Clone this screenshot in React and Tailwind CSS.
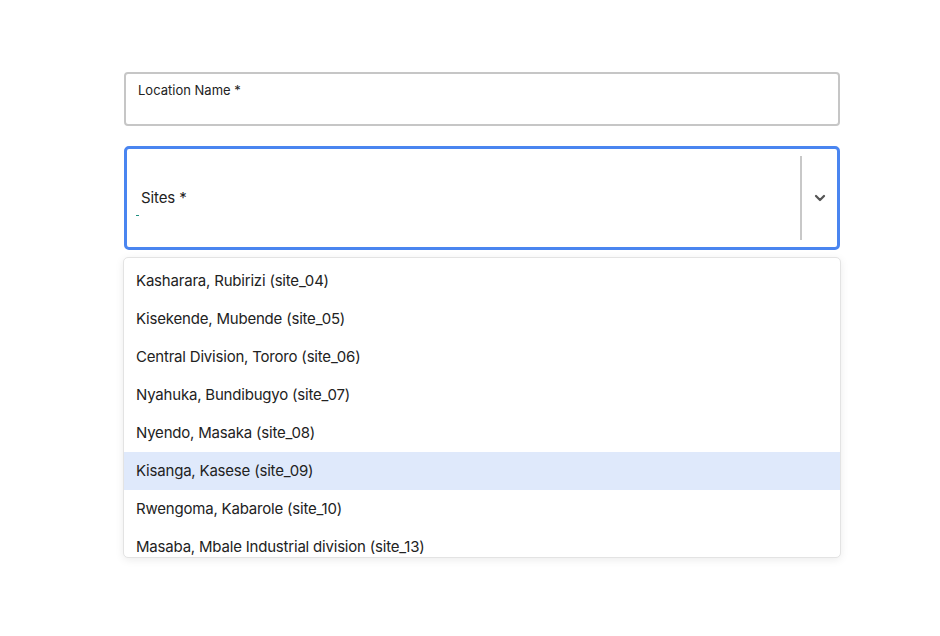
import { useState } from 'react';

const sites = [
    'Kasharara, Rubirizi (site_04)',
    'Kisekende, Mubende (site_05)',
    'Central Division, Tororo (site_06)',
    'Nyahuka, Bundibugyo (site_07)',
    'Nyendo, Masaka (site_08)',
    'Kisanga, Kasese (site_09)',
    'Rwengoma, Kabarole (site_10)',
    'Masaba, Mbale Industrial division (site_13)',
];

export default function App() {
    const [active, setActive] = useState(5);

    return (
        <div className="min-h-screen bg-white" style={{ fontFamily: 'Inter, "Liberation Sans", sans-serif' }}>
            <div className="w-[716px] ml-[124px] pt-[72px]">
                <div className="h-[54px] border-2 border-[#c6c6c6] rounded-[4px] px-[12px] pt-[8px]">
                    <label className="block text-[13px] text-[#222] leading-[16px]">Location Name *</label>
                </div>

                <div className="relative mt-[20px]">
                    <div className="h-[104px] border-[3px] border-[#4a85f0] rounded-[5px] flex items-center">
                        <div className="flex-1 relative h-full flex items-center pl-[14px]">
                            <span className="text-[15px] text-[#222] tracking-[-0.1px]">Sites *</span>
                            <span className="absolute left-[9px] top-[66px] w-[3px] h-[1px] bg-[#1f8f80]"></span>
                        </div>
                        <div className="w-[2px] h-[84px] bg-[#c8c8c8]"></div>
                        <div className="w-[35px] flex items-center justify-center">
                            <svg className="w-[16px] h-[16px] text-[#555]" viewBox="0 0 24 24" fill="none" stroke="currentColor" strokeWidth="3.4" strokeLinecap="round" strokeLinejoin="round">
                                <path d="M6 9l6 6 6-6" />
                            </svg>
                        </div>
                    </div>

                    <div className="absolute z-10 left-[-1px] right-[-1px] top-[111px] h-[301px] bg-white border border-[#e3e3e3] rounded-[5px] shadow-[0_2px_8px_rgba(0,0,0,0.08)] overflow-hidden pt-[4px]">
                        {sites.map((s, i) => (
                            <div
                                key={s}
                                onMouseEnter={() => setActive(i)}
                                className={`h-[38px] flex items-center px-[12px] text-[15px] tracking-[-0.2px] text-[#222] cursor-pointer ${i === active ? 'bg-[#dfe9fb]' : ''}`}
                            >
                                {s}
                            </div>
                        ))}
                    </div>
                </div>

                <div className="mt-[228px] h-[37px] border-2 border-[#c6c6c6] rounded-[4px]"></div>
            </div>
        </div>
    );
}
